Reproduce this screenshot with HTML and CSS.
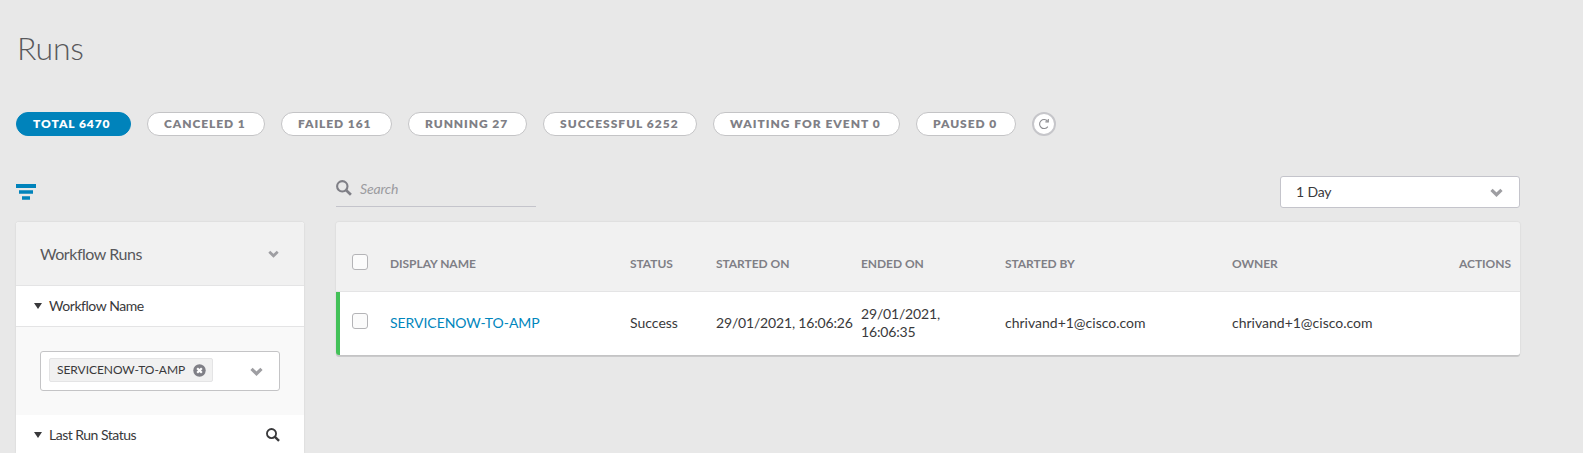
FILE: index.html
```html
<!DOCTYPE html>
<html lang="en">
<head>
<meta charset="utf-8">
<title>Runs</title>
<link rel="stylesheet" href="styles.css">
</head>
<body>
<svg class="defs" width="0" height="0">
  <symbol id="chevron" viewBox="0 0 12 8"><path d="M1.4 1.6 L6 6 L10.6 1.6" fill="none" stroke="currentColor" stroke-width="3"/></symbol>
  <symbol id="search" viewBox="0 0 16 16"><circle cx="6.3" cy="6.3" r="5.2" fill="none" stroke="currentColor" stroke-width="2.1"/><path d="M10.2 10.2 L14.9 14.7" stroke="currentColor" stroke-width="2.7"/></symbol>
</svg>
<h1 class="title">Runs</h1>
<nav class="pills">
  <button class="pill active w-total">TOTAL 6470</button>
  <button class="pill w-canceled">CANCELED 1</button>
  <button class="pill w-failed">FAILED 161</button>
  <button class="pill w-running">RUNNING 27</button>
  <button class="pill w-successful">SUCCESSFUL 6252</button>
  <button class="pill w-waiting">WAITING FOR EVENT 0</button>
  <button class="pill w-paused">PAUSED 0</button>
  <button class="refresh" aria-label="Refresh"><svg width="12" height="12" viewBox="0 0 12 12"><path d="M9.8 8.6 A4.5 4.5 0 1 1 9.6 3.2" fill="none" stroke="currentColor" stroke-width="1.1"/><path d="M10.3 1 V3.9 H7.4" fill="none" stroke="currentColor" stroke-width="1.1"/></svg></button>
</nav>
<main class="layout">
  <aside class="side">
    <div class="filter"><svg width="20" height="16" viewBox="0 0 20 16"><path d="M0 0H20V4H0ZM3 6.2H17V9.7H3ZM6 12.2H14V15.8H6Z" fill="#0083bb"/></svg></div>
    <section class="panel">
      <header class="panel-head"><span>Workflow Runs</span><svg class="chev" width="11" height="8"><use href="#chevron"/></svg></header>
      <div class="group first"><i class="caret"></i><span>Workflow Name</span></div>
      <div class="group-body">
        <div class="multi">
          <span class="tag">SERVICENOW-TO-AMP<svg width="13" height="13" viewBox="0 0 13 13"><circle cx="6.5" cy="6.5" r="6.2" fill="#7f7f86"/><path d="M4.2 4.2L8.8 8.8M8.8 4.2L4.2 8.8" stroke="#fff" stroke-width="2.2"/></svg></span>
          <svg class="chev" width="13" height="9"><use href="#chevron"/></svg>
        </div>
      </div>
      <div class="group"><i class="caret"></i><span>Last Run Status</span><svg class="find" width="14" height="14"><use href="#search"/></svg></div>
    </section>
  </aside>
  <section class="content">
    <div class="tools">
      <label class="search"><svg width="16" height="16"><use href="#search"/></svg><span>Search</span></label>
      <div class="range"><span>1 Day</span><svg class="chev" width="13" height="9"><use href="#chevron"/></svg></div>
    </div>
    <div class="table">
      <div class="row head">
        <span class="check"></span><span>DISPLAY NAME</span><span>STATUS</span><span>STARTED ON</span><span>ENDED ON</span><span>STARTED BY</span><span>OWNER</span><span class="actions">ACTIONS</span>
      </div>
      <div class="row item">
        <span class="check"></span><a class="link">SERVICENOW-TO-AMP</a><span>Success</span><span class="date">29/01/2021, 16:06:26</span><span class="date">29/01/2021,<br>16:06:35</span><span>chrivand+1@cisco.com</span><span>chrivand+1@cisco.com</span><span></span>
      </div>
    </div>
  </section>
</main>
</body>
</html>
```
FILE: styles.css
```css
* { box-sizing: border-box; }
html { overflow: hidden; }
body {
  margin: 0;
  height: 453px;
  overflow: hidden;
  padding: 0 63px 0 16px;
  background: #e8e8e8;
  color: #39393b;
  font: 14px/18px Lato, sans-serif;
}
.defs { position: absolute; }
svg { display: block; flex: none; }
.title {
  margin: 0;
  padding: 28px 0 0 1px;
  height: 112px;
  font-size: 32px;
  line-height: 40px;
  font-weight: 300;
  letter-spacing: -.2px;
  color: #58585b;
}
.pills { display: flex; gap: 16px; height: 24px; }
.pill {
  height: 24px;
  padding: 0 0 0 16px;
  border: 1px solid #c4c4c6;
  border-radius: 12px;
  background: #fff;
  color: #7f7f86;
  font: 800 12px/22px Lato, sans-serif;
  letter-spacing: .92px;
  text-align: left;
  white-space: nowrap;
}
.pill.active { background: #0083bb; border-color: #0083bb; color: #fff; }
.w-total { width: 115px; }
.w-canceled { width: 118px; }
.w-failed { width: 111px; }
.w-running { width: 119px; }
.w-successful { width: 154px; letter-spacing: 1px; }
.w-waiting { width: 187px; letter-spacing: 1px; }
.w-paused { width: 100px; }
.refresh {
  display: flex;
  align-items: center;
  justify-content: center;
  width: 24px;
  height: 24px;
  padding: 0;
  border: 2px solid #c6c6ca;
  border-radius: 50%;
  background: #fff;
  color: #8c8c90;
}
.layout { display: grid; grid-template-columns: 288px 1184px; gap: 32px; padding-top: 40px; }
.filter { height: 46px; padding-top: 8px; }
.panel {
  height: 231px;
  overflow: hidden;
  background: #fff;
  border-radius: 3px 3px 0 0;
  box-shadow: 0 0 2px rgba(0,0,0,.12);
}
.chev { color: #9e9ea2; }
.panel-head {
  display: flex;
  align-items: center;
  justify-content: space-between;
  height: 64px;
  padding: 0 25px 0 24px;
  border-bottom: 1px solid #e4e4e5;
  background: #f1f1f1;
  color: #58585b;
  font-size: 16px;
  letter-spacing: -.45px;
}
.group { display: flex; align-items: center; height: 38px; padding: 2px 24px 0 18px; letter-spacing: -.5px; }
.group.first { height: 41px; padding-top: 0; padding-bottom: 1px; border-bottom: 1px solid #e4e4e5; letter-spacing: -.45px; }
.caret { margin-right: 7px; border: 4px solid transparent; border-top: 6px solid #39393b; border-bottom: 0; }
.find { margin-left: auto; }
.group-body { height: 88px; padding: 24px; background: #f9f9f9; }
.multi {
  display: flex;
  justify-content: space-between;
  align-items: center;
  height: 40px;
  padding: 0 16px 0 8px;
  border: 1px solid #c4c4c6;
  border-radius: 3px;
  background: #fff;
}
.tag {
  display: flex;
  align-items: center;
  justify-content: space-between;
  width: 164px;
  height: 24px;
  margin-bottom: 2px;
  padding: 0 6px 0 7px;
  border: 1px solid #e4e4e5;
  border-radius: 2px;
  background: #f1f1f1;
  font-size: 12px;
  letter-spacing: -.05px;
}
.tools { display: flex; justify-content: space-between; height: 46px; }
.search {
  display: flex;
  align-items: flex-start;
  gap: 8px;
  width: 200px;
  height: 31px;
  padding-top: 4px;
  border-bottom: 1px solid #c4c4cb;
  color: #7f7f86;
}
.search span { color: #9b9b9f; font-style: italic; letter-spacing: -.15px; }
.range {
  display: flex;
  align-items: center;
  justify-content: space-between;
  width: 240px;
  height: 32px;
  padding: 0 16px 0 15px;
  border: 1px solid #c4c4cb;
  border-radius: 3px;
  background: #fff;
  letter-spacing: -.15px;
}
.table { border-radius: 3px; box-shadow: 0 0 2px rgba(0,0,0,.12), 0 2px 0 #cbcbcc; }
.row { display: grid; grid-template-columns: 38px 240px 86px 145px 144px 227px 1fr 70px; align-items: center; }
.row.head {
  height: 70px;
  padding: 14px 9px 0 16px;
  border-bottom: 1px solid #e4e4e5;
  border-radius: 3px 3px 0 0;
  background: #f1f1f1;
  color: #7f7f86;
  font-size: 12px;
  font-weight: 700;
  letter-spacing: -.05px;
}
.row.item {
  height: 63px;
  padding: 0 9px 2px 12px;
  border-left: 4px solid #43c158;
  border-radius: 0 0 3px 3px;
  background: #fff;
}
.check { width: 16px; height: 16px; margin-bottom: 4px; border: 1px solid #b4b4b7; border-radius: 3px; background: #fbfbfb; }
.actions { text-align: right; }
.link { color: #0086bd; letter-spacing: -.05px; }
.date { white-space: nowrap; letter-spacing: -.17px; }
```
